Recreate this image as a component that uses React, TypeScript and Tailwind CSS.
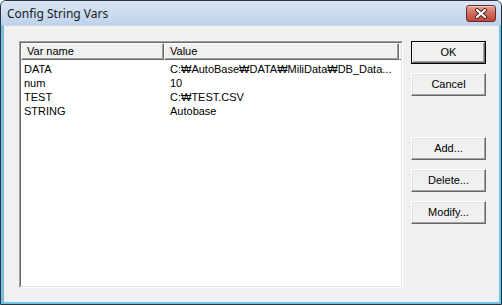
import React from "react";

const font = { fontFamily: '"Liberation Sans", "DejaVu Sans", "Noto Sans CJK KR", sans-serif' };

function Btn({ label, def }: { label: string; def?: boolean }) {
  const inner = (
    <div className="w-full h-full border border-t-white border-l-white border-r-[#696969] border-b-[#696969] shadow-[inset_-1px_-1px_0_#a0a0a0,inset_1px_1px_0_#e3e3e3] bg-[#f0f0f0] flex items-center justify-center text-[11px] text-black leading-none">
      {label}
    </div>
  );
  return (
    <div className={`w-[75px] h-[23px] ${def ? "border border-black" : ""}`}>{inner}</div>
  );
}

export default function App() {
  const rows: [string, string][] = [
    ["DATA", "C:₩AutoBase₩DATA₩MiliData₩DB_Data..."],
    ["num", "10"],
    ["TEST", "C:₩TEST.CSV"],
    ["STRING", "Autobase"],
  ];
  return (
    <div className="w-[502px] h-[305px] bg-white" style={font}>
      <div className="w-full h-full rounded-t-[6px] border border-[#2c3440] bg-[#6cc3ec] flex flex-col overflow-hidden">
        {/* title bar */}
        <div className="h-[24px] shrink-0 bg-gradient-to-b from-[#d9e6f5] to-[#bdd3ec] flex items-start pl-[6px] pr-[5px]">
          <div
            className="mt-[5px] text-[12px] leading-[15px] text-[#1a1a1a]"
            style={{ fontFamily: '"Noto Sans", "Open Sans", sans-serif' }}
          >
            Config String Vars
          </div>
          <div className="ml-auto mt-[4px] w-[30px] h-[17px] rounded-[3px] border border-[#6b2a24] bg-gradient-to-b from-[#e6a396] via-[#cf6a5c] to-[#c0443a] shadow-[inset_0_1px_0_#f3c8bf] flex items-center justify-center">
            <svg width="14" height="11" viewBox="0 0 14 11">
              <path d="M3 2 L11 9 M11 2 L3 9" stroke="#4a2320" strokeWidth="4" strokeLinecap="round" />
              <path d="M3 2 L11 9 M11 2 L3 9" stroke="#ffffff" strokeWidth="2.2" strokeLinecap="round" />
            </svg>
          </div>
        </div>
        {/* client */}
        <div className="flex-1 mx-[2px] mb-[2px] bg-[#f0f0f0] border-l border-t border-l-[#9aabc0] border-t-[#c9d7e8] flex pt-[15px] pl-[15px] pr-[13px] gap-[8px]">
          {/* list view */}
          <div className="w-[384px] h-[247px] border border-t-[#a0a0a0] border-l-[#a0a0a0] border-r-white border-b-white">
            <div className="w-full h-full border border-t-[#696969] border-l-[#696969] border-r-[#e3e3e3] border-b-[#e3e3e3] bg-white flex flex-col">
              <div className="h-[17px] flex shrink-0 text-[11px] text-black">
                <div className="w-[143px] h-full bg-[#f0f0f0] border border-t-white border-l-white border-r-[#696969] border-b-[#696969] shadow-[inset_-1px_-1px_0_#a0a0a0] pl-[5px] flex items-center leading-none">
                  Var name
                </div>
                <div className="w-[235px] h-full bg-[#f0f0f0] border border-t-white border-l-white border-r-[#696969] border-b-[#696969] shadow-[inset_-1px_-1px_0_#a0a0a0] pl-[5px] flex items-center leading-none">
                  Value
                </div>
                <div className="flex-1 h-full bg-[#f0f0f0] border-l border-t border-b border-l-white border-t-white border-b-[#696969]" />
              </div>
              <div className="pt-[2px] text-[11px] text-black">
                {rows.map(([k, v]) => (
                  <div key={k} className="flex h-[14px] leading-[14px]">
                    <div className="w-[143px] pl-[3px] whitespace-nowrap">{k}</div>
                    <div className="pl-[6px] whitespace-nowrap">{v}</div>
                  </div>
                ))}
              </div>
            </div>
          </div>
          {/* buttons */}
          <div className="w-[75px] flex flex-col">
            <Btn label="OK" def />
            <div className="h-[9px]" />
            <Btn label="Cancel" />
            <div className="h-[41px]" />
            <Btn label="Add..." />
            <div className="h-[9px]" />
            <Btn label="Delete..." />
            <div className="h-[9px]" />
            <Btn label="Modify..." />
          </div>
        </div>
      </div>
    </div>
  );
}
